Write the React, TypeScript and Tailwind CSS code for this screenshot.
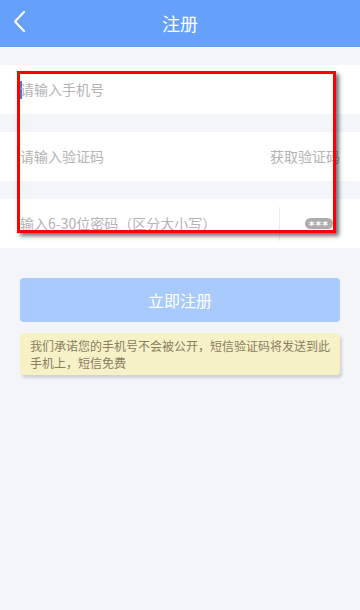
const font = { fontFamily: '"Noto Sans CJK SC", "Noto Sans", sans-serif' };

export default function App() {
  return (
    <div className="relative w-[360px] h-[610px] overflow-hidden bg-[#f4f5f9]" style={font}>
      {/* Header */}
      <div className="relative h-[47px] bg-[#65a0fa] flex items-center justify-center">
        <svg className="absolute left-0 top-0" width="40" height="47" viewBox="0 0 40 47">
          <polyline points="24,12 15,21.5 24,31" fill="none" stroke="white" strokeWidth="2" strokeLinecap="round" strokeLinejoin="round" />
        </svg>
        <span className="text-white text-[18px]">注册</span>
      </div>

      <div className="pt-[18px] flex flex-col gap-[18px]">
        <div className="h-[49px] bg-white flex items-center px-5">
          <span className="w-[2px] h-[18px] bg-[#4a78d8] mr-[-2px]" />
          <span className="text-[14px] text-[#b3b3b3]">请输入手机号</span>
        </div>
        <div className="h-[49px] bg-white flex items-center justify-between px-5">
          <span className="text-[14px] text-[#b3b3b3]">请输入验证码</span>
          <span className="text-[14px] text-[#b3b3b3]">获取验证码</span>
        </div>
        <div className="h-[49px] bg-white flex items-center pl-5">
          <span className="flex-1 text-[14px] text-[#b3b3b3]">输入6-30位密码（区分大小写）</span>
          <div className="w-px h-[34px] bg-[#ececec]" />
          <div className="w-[80px] flex justify-end pr-[27px]">
            <span className="h-[11px] w-[28px] rounded-full bg-[#acacac] flex items-center justify-center">
              <span className="relative top-[2px] text-white text-[11px] leading-none font-bold tracking-[1px]" style={{ fontFamily: '"DejaVu Sans", sans-serif' }}>
                ***
              </span>
            </span>
          </div>
        </div>
      </div>

      <div className="px-5 pt-[30px]">
        <div className="h-[44px] rounded bg-[#a9cafd] flex items-center justify-center text-white text-[16px]">
          立即注册
        </div>
        <div className="mt-[11px] bg-[#f6f1c7] rounded-sm px-[10px] py-[4px] text-[12px] leading-[17px] text-[#8a7d62] shadow-[2px_3px_3px_rgba(0,0,0,0.15)]">
          我们承诺您的手机号不会被公开，短信验证码将发送到此手机上，短信免费
        </div>
      </div>

      {/* annotation box */}
      <div className="absolute left-[17px] top-[71px] w-[319px] h-[162px] border-[3px] border-[#ff0000] shadow-[3px_3px_4px_rgba(0,0,0,0.55)]" />
    </div>
  );
}
